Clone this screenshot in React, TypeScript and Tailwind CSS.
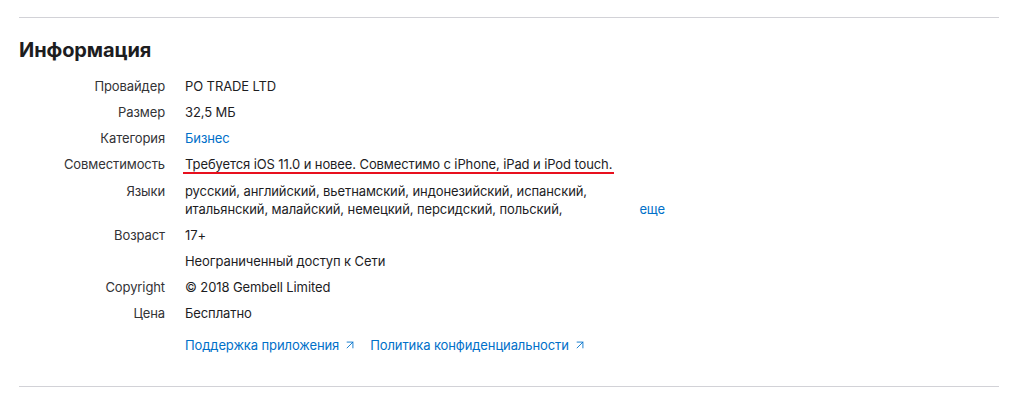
import { ArrowUpRight } from "lucide-react";

const rows: { label: string; value: string; link?: boolean }[] = [
  { label: "Провайдер", value: "PO TRADE LTD" },
  { label: "Размер", value: "32,5 МБ" },
  { label: "Категория", value: "Бизнес", link: true },
];

const rowsAfter: { label: string; value: string }[] = [
  { label: "Возраст", value: "17+" },
  { label: "", value: "Неограниченный доступ к Сети" },
  { label: "Copyright", value: "© 2018 Gembell Limited" },
  { label: "Цена", value: "Бесплатно" },
];

export default function App() {
  return (
    <main
      className="min-h-screen bg-white pl-[19px] pr-[34px] pt-[17px] text-[13px] leading-[18px] tracking-[-0.1px] text-[#1d1d1f]"
      style={{ fontFamily: "Inter, 'Liberation Sans', sans-serif" }}
    >
      <div className="border-t border-[#d2d2d7]" />

      <h2 className="mt-[20px] text-[20px] font-bold leading-[24px] tracking-[-0.1px] text-[#1d1d1f]">
        Информация
      </h2>

      <dl className="mt-[15px] grid grid-cols-[146px_1fr] gap-x-[20px] gap-y-[8px]">
        {rows.map((r) => (
          <div key={r.label} className="contents">
            <dt className="text-right text-[#333336]">{r.label}</dt>
            <dd className={r.link ? "text-[#0070c9]" : ""}>{r.value}</dd>
          </div>
        ))}

        <dt className="text-right text-[#333336]">Совместимость</dt>
        <dd>
          <span className="-mx-[2px] inline-block border-b-2 border-[#e8101e] px-[2px] leading-[16px]">
            Требуется iOS 11.0 и новее. Совместимо с iPhone, iPad и iPod touch.
          </span>
        </dd>

        <dt className="text-right text-[#333336]">Языки</dt>
        <dd className="flex w-[480px] items-end justify-between">
          <span className="w-[415px]">
            русский, английский, вьетнамский, индонезийский, испанский, итальянский, малайский, немецкий, персидский, польский,
          </span>
          <span className="text-[#0070c9]">еще</span>
        </dd>

        {rowsAfter.map((r) => (
          <div key={r.value} className="contents">
            <dt className="text-right text-[#333336]">{r.label}</dt>
            <dd>{r.value}</dd>
          </div>
        ))}

        <dt />
        <dd className="mt-[6px] flex gap-[13px] text-[#0070c9]">
          <a className="flex items-center gap-[4px]">
            Поддержка приложения
            <ArrowUpRight size={14} strokeWidth={1.5} />
          </a>
          <a className="flex items-center gap-[4px]">
            Политика конфиденциальности
            <ArrowUpRight size={14} strokeWidth={1.5} />
          </a>
        </dd>
      </dl>

      <div className="mt-[32px] border-t border-[#d2d2d7]" />
    </main>
  );
}
